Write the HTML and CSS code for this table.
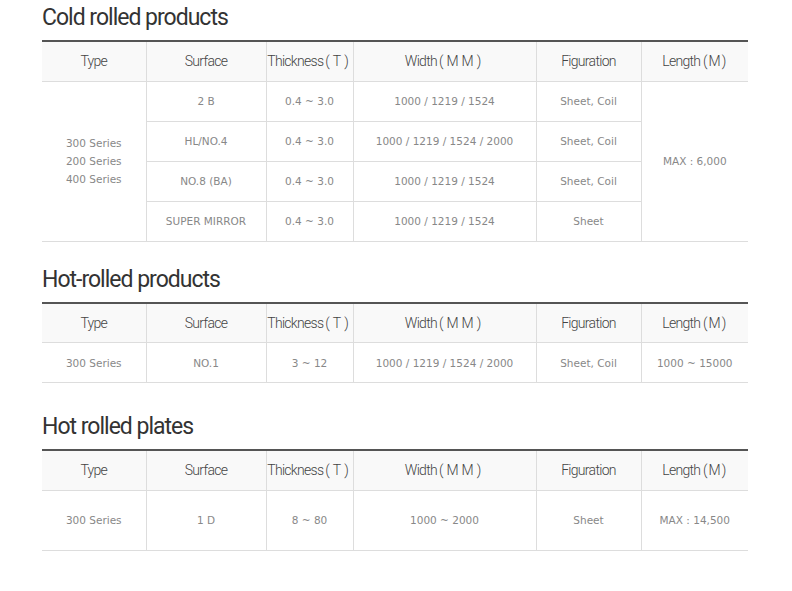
FILE: index.html
```html
<!DOCTYPE html>
<html>
<head>
<meta charset="utf-8">
<link rel="stylesheet" href="styles.css">
</head>
<body>
<div class="page">
  <section class="sec">
    <h2 class="title">Cold rolled products</h2>
    <table class="spec">
      <colgroup>
        <col class="c1"><col class="c2"><col class="c3"><col class="c4"><col class="c5"><col class="c6">
      </colgroup>
      <thead>
        <tr><th>Type</th><th>Surface</th><th>Thickness<span class="fw">(T)</span></th><th>Width<span class="fw">(MM)</span></th><th>Figuration</th><th>Length <span class="fw1">(M)</span></th></tr>
      </thead>
      <tbody>
        <tr><td rowspan="4" class="multi">300 Series<br>200 Series<br>400 Series</td><td>2 B</td><td>0.4 ~ 3.0</td><td>1000 / 1219 / 1524</td><td>Sheet, Coil</td><td rowspan="4" class="last">MAX : 6,000</td></tr>
        <tr><td>HL/NO.4</td><td>0.4 ~ 3.0</td><td>1000 / 1219 / 1524 / 2000</td><td>Sheet, Coil</td></tr>
        <tr><td>NO.8 (BA)</td><td>0.4 ~ 3.0</td><td>1000 / 1219 / 1524</td><td>Sheet, Coil</td></tr>
        <tr><td>SUPER MIRROR</td><td>0.4 ~ 3.0</td><td>1000 / 1219 / 1524</td><td>Sheet</td></tr>
      </tbody>
    </table>
  </section>
  <section class="sec">
    <h2 class="title">Hot-rolled products</h2>
    <table class="spec">
      <colgroup>
        <col class="c1"><col class="c2"><col class="c3"><col class="c4"><col class="c5"><col class="c6">
      </colgroup>
      <thead>
        <tr><th>Type</th><th>Surface</th><th>Thickness<span class="fw">(T)</span></th><th>Width<span class="fw">(MM)</span></th><th>Figuration</th><th>Length <span class="fw1">(M)</span></th></tr>
      </thead>
      <tbody>
        <tr><td>300 Series</td><td>NO.1</td><td>3 ~ 12</td><td>1000 / 1219 / 1524 / 2000</td><td>Sheet, Coil</td><td>1000 ~ 15000</td></tr>
      </tbody>
    </table>
  </section>
  <section class="sec sec-wide">
    <h2 class="title">Hot rolled plates</h2>
    <table class="spec">
      <colgroup>
        <col class="c1"><col class="c2"><col class="c3"><col class="c4"><col class="c5"><col class="c6">
      </colgroup>
      <thead>
        <tr><th>Type</th><th>Surface</th><th>Thickness<span class="fw">(T)</span></th><th>Width<span class="fw">(MM)</span></th><th>Figuration</th><th>Length <span class="fw1">(M)</span></th></tr>
      </thead>
      <tbody>
        <tr class="tall"><td>300 Series</td><td>1 D</td><td>8 ~ 80</td><td>1000 ~ 2000</td><td>Sheet</td><td>MAX : 14,500</td></tr>
      </tbody>
    </table>
  </section>
</div>
</body>
</html>
```
FILE: styles.css
```css
* { box-sizing: border-box; }
html, body { margin: 0; padding: 0; background: #fff; }
.page { padding: 0 0 0 42px; width: 749px; }
.sec + .sec { margin-top: 20px; }
.sec-wide { margin-top: 26px !important; }
.title {
  margin: 0;
  height: 40px;
  line-height: 36px;
  font-family: Roboto, "Liberation Sans", sans-serif;
  font-weight: 400;
  font-size: 23px;
  color: #333;
  letter-spacing: -1px;
}
.spec {
  width: 706px;
  border-collapse: collapse;
  table-layout: fixed;
  border-top: 2px solid #555;
}
.c1 { width: 104px; } .c2 { width: 120px; } .c3 { width: 87px; }
.c4 { width: 183px; } .c5 { width: 105px; } .c6 { width: 107px; }
.spec th {
  height: 40px;
  background: #f9f9f9;
  font-family: Roboto, sans-serif;
  font-weight: 300;
  font-size: 14px;
  letter-spacing: -0.7px;
  color: #444;
  text-align: center;
  padding: 0;
  border: 1px solid #ddd;
  border-top: none;
}
.spec th .fw { letter-spacing: 3px; margin-left: 2px; }
.spec th .fw1 { letter-spacing: 1px; }
.spec td {
  height: 40px;
  font-family: "DejaVu Sans", sans-serif;
  font-size: 10.5px;
  color: #888;
  text-align: center;
  padding: 0;
  border: 1px solid #ddd;
}
.spec th:first-child, .spec td:first-child { border-left: none; }
.spec th:last-child, .spec td.last, .spec tr > td:last-child { border-right: none; }
.spec td.multi { line-height: 18px; }
.spec tr.tall td { height: 60px; }
```
